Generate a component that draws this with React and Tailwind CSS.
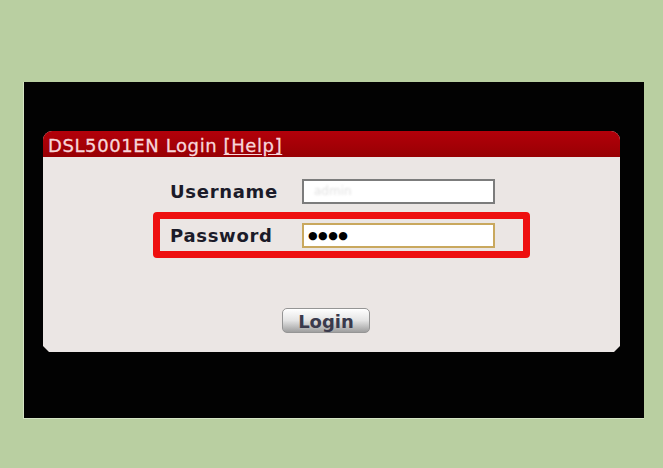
import React from 'react';

const font = "font-['DejaVu_Sans','Verdana',sans-serif]";

const App = () => {
  return (
    <div className={`w-[663px] h-[468px] bg-[#b9cfa1] pt-[82px] pl-[23px] overflow-hidden ${font}`}>
      {/* Black backdrop */}
      <div className="w-[621px] h-[337px] bg-[#020202] border-l border-b border-[#d4e4c4] pt-[49px] pl-[19px]">
        {/* Login panel */}
        <div className="w-[577px] h-[221px] bg-[#ebe6e4] rounded-t-[9px] flex flex-col [clip-path:polygon(0_0,100%_0,100%_calc(100%-6px),calc(100%-6px)_100%,6px_100%,0_calc(100%-6px))]">
          {/* Header */}
          <div className="h-[26px] bg-gradient-to-b from-[#b3000a] to-[#980004] rounded-t-[9px] flex items-end pl-[5px] pb-[1px]">
            <span className="text-[18px] leading-[20px] tracking-[0.6px] text-[#f7d6da] [-webkit-text-stroke:0.3px_#f7d6da]">
              DSL5001EN Login <span className="underline underline-offset-2">[Help]</span>
            </span>
          </div>

          {/* Username row */}
          <div className="mt-[22px] ml-[127px] flex items-center h-[24px]">
            <span className="w-[132px] text-[18px] font-bold tracking-[0.7px] text-[#1b1b29]">Username</span>
            <div className="w-[193px] h-[25px] bg-white border-2 border-[#7c7c7c] flex items-center pl-[10px]">
              <span className="text-[12px] text-[#e2e2e2] blur-[1px]">admin</span>
            </div>
          </div>

          {/* Password row, highlighted */}
          <div className="mt-[9px] ml-[110px] w-[377px] h-[46px] border-[7px] border-[#ee0f0f] rounded-[4px] flex items-center pl-[10px]">
            <span className="w-[132px] text-[18px] font-bold tracking-[0.7px] text-[#1b1b29]">Password</span>
            <div className="w-[193px] h-[25px] bg-white border-2 border-[#c9a85e] flex items-center pl-[4px]">
              <span className="text-[11px] leading-none tracking-[0.5px] text-black">●●●●</span>
            </div>
          </div>

          {/* Login button */}
          <div className="mt-[50px] ml-[239px]">
            <button className="w-[88px] h-[25px] rounded-[5px] border border-[#959595] bg-gradient-to-b from-[#ffffff] via-[#e4e4e4] to-[#9f9f9f] text-[18px] leading-none font-bold text-[#3a3a4c] flex items-center justify-center pt-[2px] shadow-[inset_0_1px_0_#fff]">
              Login
            </button>
          </div>
        </div>
      </div>
    </div>
  );
};

export default App;
